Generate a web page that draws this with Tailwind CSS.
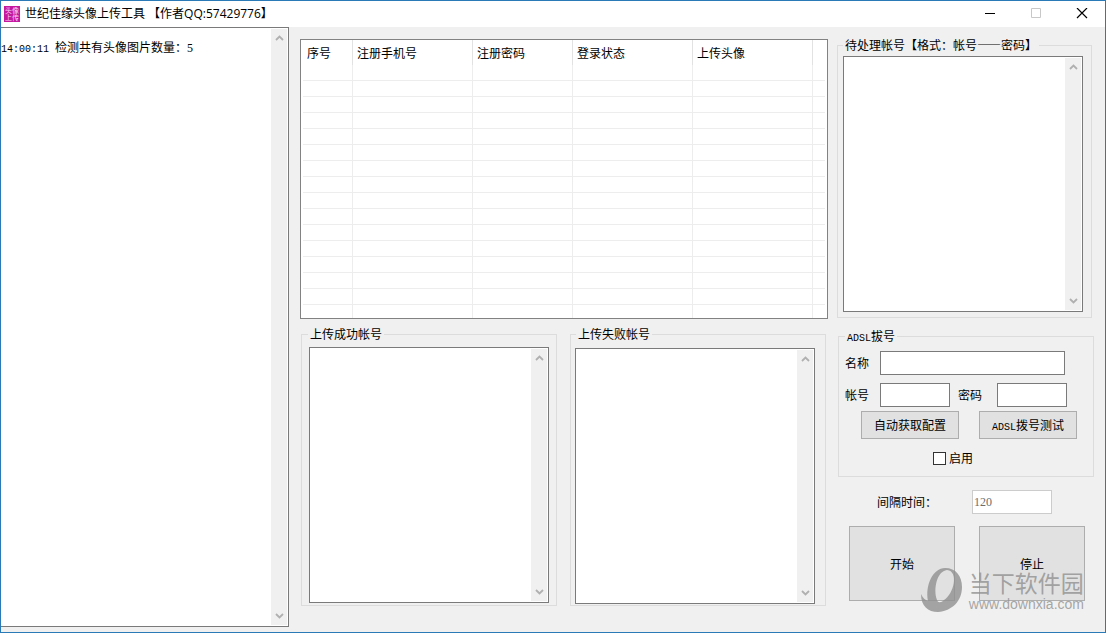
<!DOCTYPE html>
<html lang="zh-CN">
<head>
<meta charset="utf-8">
<meta name="viewport" content="width=device-width, initial-scale=1">
<title>世纪佳缘头像上传工具</title>
<script src="https://cdn.jsdelivr.net/npm/@tailwindcss/browser@4"></script>
</head>
<body class="bg-[#f0f0f0] font-['Noto_Sans_CJK_SC',sans-serif] text-[12px] leading-4 text-black">
<svg class="hidden" aria-hidden="true">
  <symbol id="up" viewBox="0 0 9 6"><path d="M1 5 4.500 1.500 8 5" fill="none" stroke="#b0b0b0" stroke-width="1.800"/></symbol>
  <symbol id="down" viewBox="0 0 9 6"><path d="M1 1 4.500 4.500 8 1" fill="none" stroke="#b0b0b0" stroke-width="1.800"/></symbol>
</svg>
<div class="relative flex min-h-screen flex-col border border-[#2a7ab8]">
  <header class="flex h-[26px] items-center bg-white pl-[3px]">
    <svg class="h-4 w-4" viewBox="0 0 16 16" aria-hidden="true">
      <rect width="16" height="16" fill="#c4189f"/>
      <text x="8" y="7" font-size="7" text-anchor="middle" fill="#fbd3f2">头像</text>
      <text x="8" y="14" font-size="7" text-anchor="middle" fill="#fbd3f2">上传</text>
    </svg>
    <h1 class="ml-[5px] flex-1 font-['Open_Sans','Noto_Sans_CJK_SC',sans-serif] text-[12px]">世纪佳缘头像上传工具 【作者QQ:57429776】</h1>
    <button aria-label="最小化" class="flex h-full w-[46px] items-center justify-center"><svg class="h-3 w-3" viewBox="0 0 12 12"><path d="M1 5.500h10" stroke="#000"/></svg></button>
    <button aria-label="最大化" disabled class="flex h-full w-[46px] items-center justify-center"><svg class="h-3 w-3" viewBox="0 0 12 12"><path d="M1.500 .500h9v9h-9z" fill="none" stroke="#c8c8c8"/></svg></button>
    <button aria-label="关闭" class="flex h-full w-[46px] items-center justify-center"><svg class="h-3 w-3" viewBox="0 0 12 12"><path d="m1 0 10 10M11 0 1 10" stroke="#000" stroke-width="1.200"/></svg></button>
  </header>

  <main class="flex flex-1">
    <section aria-label="日志" class="mb-[5px] flex w-72 border-y border-r border-[#7a7a7a] bg-white py-px pr-px">
      <div class="flex-1 pt-2.5 whitespace-pre"><span class="font-['Liberation_Mono',monospace] text-[10px] leading-none">14:00:11 </span>检测共有头像图片数量：<span class="font-['Liberation_Serif',serif] leading-none">5</span></div>
      <div class="flex w-4 flex-col items-center justify-between bg-[#f0f0f0] py-1.5"><svg class="h-1.5 w-[9px]"><use href="#up"/></svg><svg class="h-1.5 w-[9px]"><use href="#down"/></svg></div>
    </section>

    <div class="ml-[11px] min-w-0 flex-1 pt-3">
      <div class="h-[280px] overflow-hidden border border-[#828282] bg-white px-0.5">
        <table class="w-full table-fixed border-separate border-spacing-0 [&_td]:h-4 [&_td]:border-r [&_td]:border-b [&_td]:border-[#ededed] [&_td:last-child]:border-r-0 [&_th]:h-[25px] [&_th]:border-r [&_th]:border-[#e2e2e2] [&_th]:p-0 [&_th]:pl-1 [&_th]:text-left [&_th]:font-normal [&_th:last-child]:border-r-0">
          <colgroup><col class="w-[50px]"><col class="w-[120px]"><col class="w-[100px]"><col class="w-[120px]"><col class="w-[120px]"><col></colgroup>
          <thead><tr><th>序号</th><th>注册手机号</th><th>注册密码</th><th>登录状态</th><th>上传头像</th><th></th></tr></thead>
          <tbody>
            <tr><td></td><td></td><td></td><td></td><td></td><td></td></tr>
            <tr><td></td><td></td><td></td><td></td><td></td><td></td></tr>
            <tr><td></td><td></td><td></td><td></td><td></td><td></td></tr>
            <tr><td></td><td></td><td></td><td></td><td></td><td></td></tr>
            <tr><td></td><td></td><td></td><td></td><td></td><td></td></tr>
            <tr><td></td><td></td><td></td><td></td><td></td><td></td></tr>
            <tr><td></td><td></td><td></td><td></td><td></td><td></td></tr>
            <tr><td></td><td></td><td></td><td></td><td></td><td></td></tr>
            <tr><td></td><td></td><td></td><td></td><td></td><td></td></tr>
            <tr><td></td><td></td><td></td><td></td><td></td><td></td></tr>
            <tr><td></td><td></td><td></td><td></td><td></td><td></td></tr>
            <tr><td></td><td></td><td></td><td></td><td></td><td></td></tr>
            <tr><td></td><td></td><td></td><td></td><td></td><td></td></tr>
            <tr><td></td><td></td><td></td><td></td><td></td><td></td></tr>
            <tr><td></td><td></td><td></td><td></td><td></td><td></td></tr>
            <tr><td></td><td></td><td></td><td></td><td></td><td></td></tr>
          </tbody>
        </table>
      </div>
      <div class="mt-[7px] flex gap-[13px] pr-0.5 pl-px">
        <fieldset class="min-w-0 flex-1 border border-[#dcdcdc] px-[7px] pt-[5px] pb-0.5">
          <legend class="-ml-px px-0.5">上传成功帐号</legend>
          <div class="flex h-64 border border-[#7a7a7a] bg-white p-px">
            <textarea aria-label="上传成功帐号" class="min-w-0 flex-1 resize-none outline-none"></textarea>
            <div class="flex w-4 flex-col items-center justify-between bg-[#f0f0f0] py-1.5"><svg class="h-1.5 w-[9px]"><use href="#up"/></svg><svg class="h-1.5 w-[9px]"><use href="#down"/></svg></div>
          </div>
        </fieldset>
        <fieldset class="min-w-0 flex-1 border border-[#dcdcdc] pt-1.5 pr-2.5 pb-px pl-1">
          <legend class="ml-px px-0.5">上传失败帐号</legend>
          <div class="flex h-64 border border-[#7a7a7a] bg-white p-px">
            <textarea aria-label="上传失败帐号" class="min-w-0 flex-1 resize-none outline-none"></textarea>
            <div class="flex w-4 flex-col items-center justify-between bg-[#f0f0f0] py-1.5"><svg class="h-1.5 w-[9px]"><use href="#up"/></svg><svg class="h-1.5 w-[9px]"><use href="#down"/></svg></div>
          </div>
        </fieldset>
      </div>
    </div>

    <div class="mr-[11px] ml-[9px] w-[257px] pt-2.5">
      <fieldset class="mr-0.5 min-w-0 border border-[#dcdcdc] pt-[3px] pr-2 pb-[5px] pl-[5px]">
        <legend class="px-0.5 whitespace-nowrap">待处理帐号【格式：帐号——密码】</legend>
        <div class="flex h-64 border border-[#7a7a7a] bg-white p-px">
          <textarea aria-label="待处理帐号" class="min-w-0 flex-1 resize-none outline-none"></textarea>
          <div class="flex w-4 flex-col items-center justify-between bg-[#f0f0f0] py-1.5"><svg class="h-1.5 w-[9px]"><use href="#up"/></svg><svg class="h-1.5 w-[9px]"><use href="#down"/></svg></div>
        </div>
      </fieldset>

      <fieldset class="mt-2.5 ml-px min-w-0 border border-[#dcdcdc] px-1.5 pt-[7px] pb-2.5">
        <legend class="h-4 px-0.5"><span class="font-['Liberation_Mono',monospace] text-[10px] leading-none">ADSL</span>拔号</legend>
        <div class="flex items-center">
          <label for="name" class="w-[35px]">名称</label>
          <input id="name" class="h-6 w-[185px] border border-[#7a7a7a] bg-white px-0.5">
        </div>
        <div class="mt-2 flex items-center">
          <label for="account" class="w-[35px]">帐号</label>
          <input id="account" class="h-6 w-[70px] border border-[#7a7a7a] bg-white px-0.5">
          <label for="password" class="w-[47px] pl-2">密码</label>
          <input id="password" class="h-6 w-[70px] border border-[#7a7a7a] bg-white px-0.5">
        </div>
        <div class="mt-1 flex gap-5 pl-4">
          <button class="h-7 w-[98px] border border-[#adadad] bg-[#e1e1e1]">自动获取配置</button>
          <button class="h-7 w-[98px] border border-[#adadad] bg-[#e1e1e1]"><span class="font-['Liberation_Mono',monospace] text-[10px] leading-none">ADSL</span>拨号测试</button>
        </div>
        <div class="mt-[11px] flex h-4 items-center gap-[3px] pl-[88px]">
          <input id="enable" type="checkbox" class="h-[13px] w-[13px] appearance-none border border-[#333] bg-white checked:bg-[#333]">
          <label for="enable">启用</label>
        </div>
      </fieldset>

      <div class="mt-[13px] flex items-center pl-10">
        <label for="interval" class="w-[95px]">间隔时间：</label>
        <input id="interval" value="120" disabled class="h-6 w-20 border border-[#ccc] bg-white px-px font-['Liberation_Serif',serif] text-[#6d6d6d]">
      </div>
      <div class="mt-3 flex gap-6 pl-3">
        <button class="h-[75px] w-[106px] border border-[#adadad] bg-[#e1e1e1]">开始</button>
        <button class="h-[75px] w-[106px] border border-[#adadad] bg-[#e1e1e1]">停止</button>
      </div>
    </div>
  </main>

  <div class="pointer-events-none absolute right-[21px] bottom-[19px] flex items-center gap-1.5 text-[#909090]/80">
    <svg class="h-[46px] w-[43px]" viewBox="0 0 43 46" aria-hidden="true"><path fill="currentColor" fill-rule="evenodd" d="M25 1C36 1 42 9 42 20C42 34 32 44 18 45C8 45 1 39 1 27C3 31 5 33 8 34C5 18 13 1 25 1ZM27 3C17 4 13 22 17 33C18 36 21 36 24 33C34 27 39 4 27 3Z"/></svg>
    <div>
      <div class="text-[23px] leading-7">当下软件园</div>
      <div class="font-['Liberation_Sans',sans-serif] text-[14px] leading-4">www.downxia.com</div>
    </div>
  </div>
</div>
</body>
</html>
